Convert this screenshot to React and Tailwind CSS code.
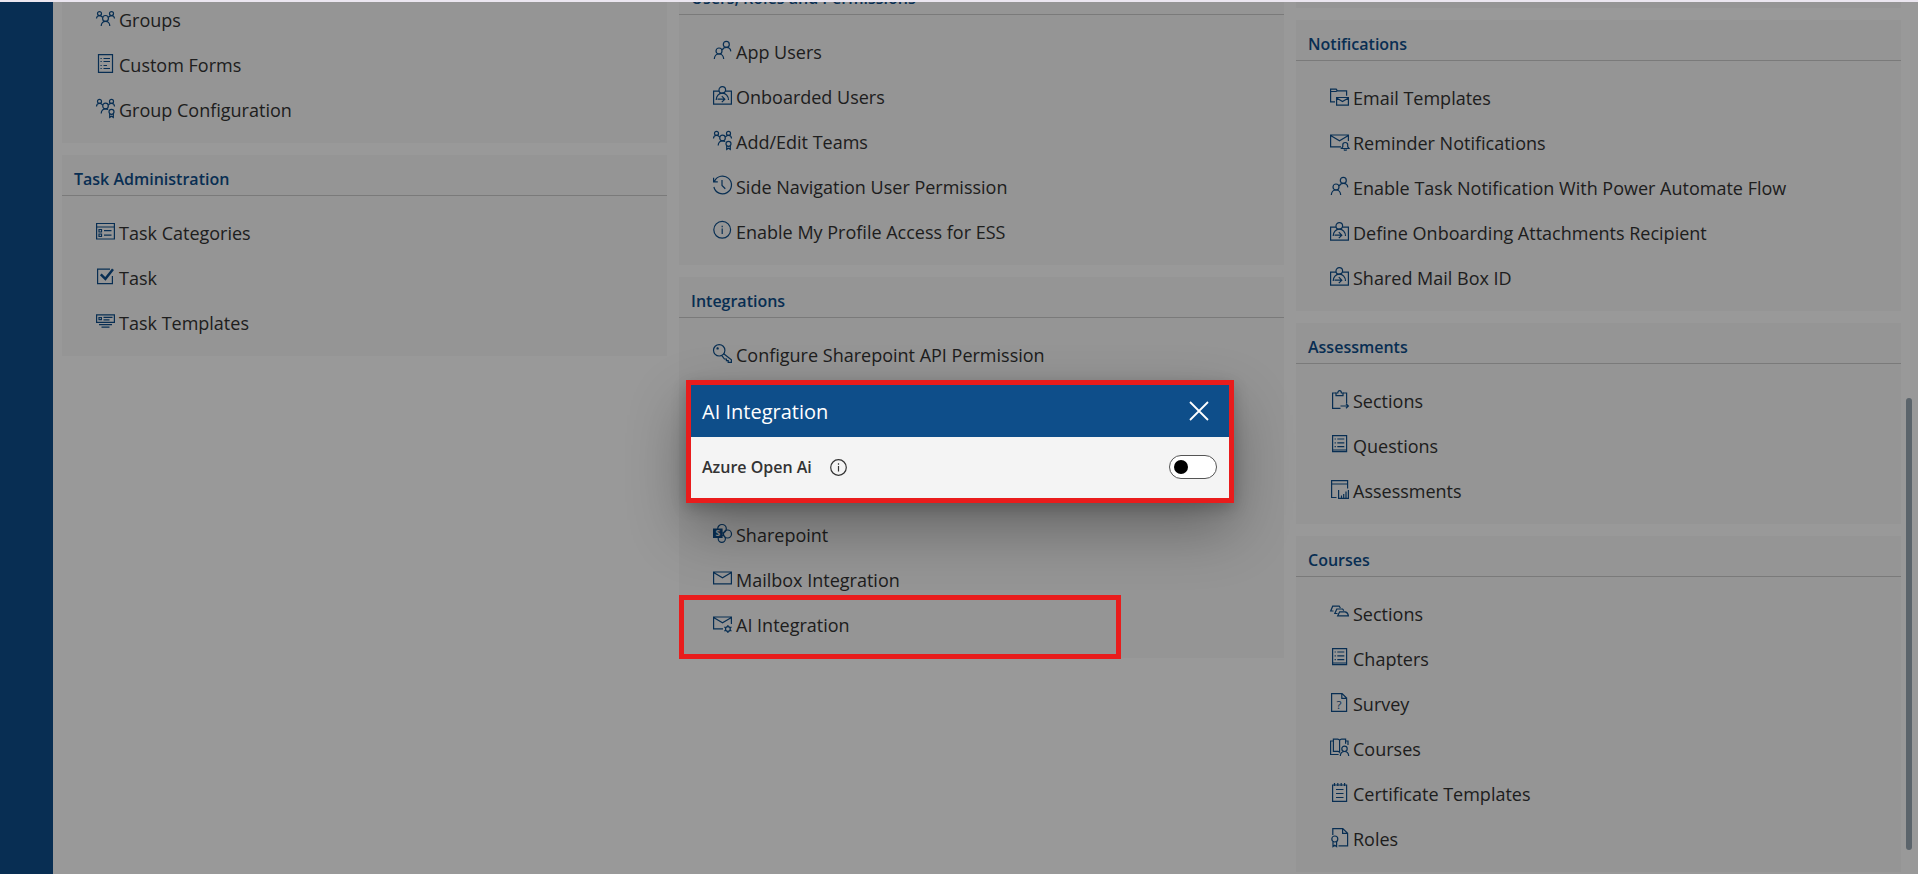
const Svg = ({ children }) => (
  <svg
    viewBox="0 0 19 19"
    className="size-[19px] shrink-0 overflow-visible"
    fill="none"
    stroke="currentColor"
    strokeWidth="1.2"
    aria-hidden="true"
  >
    {children}
  </svg>
);

const Letter = ({ x, y, size, children, className }) => (
  <text x={x} y={y} fontSize={size} textAnchor="middle" stroke="none" className={className}>
    {children}
  </text>
);

const icons = {
  groups: (
    <>
      <circle cx="3.5" cy="4.6" r="2" />
      <circle cx="15.5" cy="4.6" r="2" />
      <circle cx="9.5" cy="9.4" r="2.9" />
      <path d="M.5 9.6c0-1.700 1.200-3 3-3 1.500 0 2.500.8 3.200 1.800M18.500 9.600c0-1.700-1.200-3-3-3-1.500 0-2.500.8-3.200 1.800M5.200 17c0-2.800 1.800-4.700 4.300-4.700s4.300 1.900 4.300 4.700" />
    </>
  ),
  team: (
    <>
      <circle cx="3.500" cy="2.400" r="2" />
      <circle cx="15.500" cy="2.400" r="2" />
      <circle cx="9.500" cy="7" r="2.800" />
      <path d="M.5 7.400c0-1.700 1.200-3 3-3 1.500 0 2.500.8 3.200 1.600M18.500 7.400c0-1.700-1.200-3-3-3-1.500 0-2.500.8-3.200 1.600M5.200 14.500c0-2.800 1.800-4.700 4.300-4.700 1 0 1.900.2 2.700.8" />
      <circle cx="15.500" cy="12.800" r="2.500" />
      <path d="M13.700 14.500v4l1.800-1.200 1.800 1.200v-4" />
    </>
  ),
  form: (
    <>
      <path d="M2.500.6h14v17.800h-14z" />
      <path d="M7.500 4.500h6.500M7.500 7.500h6.500M7.500 11.500h3.500M7.500 14.500h6.500M4.500 4.500h1.200M4.500 7.500h1.200M4.500 11.500h1.200M4.500 14.500h1.200" />
    </>
  ),
  categories: (
    <>
      <path d="M.6 1.500h17.800v15.500H.6zM.6 5h17.800" />
      <path d="M3 7.500h2.500V10H3zM3 12h2.500v2.500H3zM8 8.700h7.500M8 13.200h7.500" />
    </>
  ),
  task: (
    <>
      <path d="M14 2.100H1.600v14.500h14.800V9" />
      <path d="M4.800 7.300l4.600 4.500 7.600-9.500" strokeWidth="2.500" />
    </>
  ),
  taskTemplate: (
    <>
      <path d="M.6 2.800h17.800v7.600H.6z" />
      <path d="M3 5.500h2.400v2.200H3zM7.500 5.300h9M7.500 7.800h6M3 12.600h13M5.500 15.200h8" />
    </>
  ),
  users: (
    <>
      <circle cx="13.300" cy="3.400" r="3" />
      <circle cx="6" cy="10" r="3" />
      <path d="M9.300 9c.6-1.700 2-2.600 4-2.600 2.500 0 4.300 1.600 4.500 4M1.300 18c.2-3 2-5 4.700-5s4.500 2 4.700 5" />
    </>
  ),
  onboard: (
    <>
      <circle cx="9.300" cy="3.900" r="3.300" />
      <path d="M6 5.200H.6v13h17.800v-13h-5.700" />
      <path d="M3.200 14c0-4 2.600-6.800 6.100-6.800s6.200 2.800 6.200 6.800M4.500 13.200h7M8.800 10.200l3 3-3 3" />
    </>
  ),
  history: (
    <>
      <path d="M1.500 5.200A8.900 8.900 0 1 1 .9 11M.6 1.800v4h4.200M9 4v5.500l3.300 3.200" />
    </>
  ),
  info: (
    <>
      <circle cx="9.200" cy="8.800" r="8.400" />
      <path d="M9.200 7.500v5.500M9.200 4.800v1.400" />
    </>
  ),
  key: (
    <>
      <circle cx="6.200" cy="6.300" r="5.700" />
      <path d="M10.700 9.800l7.700 6v2.600h-3.200v-1.700h-1.800V15h-2l-2.300-3.200" />
      <circle cx="4.600" cy="4.400" r=".6" fill="currentColor" />
    </>
  ),
  sharepoint: (
    <>
      <circle cx="9" cy="4.800" r="4.300" />
      <circle cx="14.500" cy="10" r="4" />
      <circle cx="8.800" cy="14.800" r="3.600" />
      <path d="M0 4.500h9.600v9.500H0z" fill="currentColor" stroke="none" />
      <Letter x="4.800" y="12.300" size="8.500" className="fill-[#f2f2f2] font-bold">S</Letter>
    </>
  ),
  mail: <path d="M.6 3h17.800v11.800H.6zM.6 3.500l8.900 5.300 8.900-5.300" />,
  mailGear: (
    <>
      <path d="M10 14.800H.6V3h17.800v7M.6 3.500l8.900 5.300 8.900-5.300" />
      <circle cx="14.900" cy="15" r="2.400" />
      <path d="M14.900 10.900v1.700M14.900 17.400v1.700M11.300 13l1.500.8M17 16.200l1.500.8M11.300 17l1.500-.8M17 13.800l1.500-.8" />
    </>
  ),
  mailBell: (
    <>
      <path d="M11 14.800H.6V3h17.800v6M.6 3.500l8.900 5.300 8.900-5.300" />
      <path d="M11.500 16.500h7.500l-1.300-1.800v-2c0-1.300-1-2.200-2.400-2.200s-2.500.9-2.500 2.200v2zM14 17.500c.3 1 2.300 1 2.600 0" />
    </>
  ),
  folderMail: (
    <>
      <path d="M5 14.800H.6V2.200h5.600l1.200 1.600h9.200v5M.6 4.500h5.500l1.300-.7" />
      <path d="M6.600 10.500h11.800v7.700H6.600zM6.600 11l5.900 3.500 5.900-3.500" />
    </>
  ),
  clipboard: (
    <>
      <path d="M6 3H2.600v15.400h7.900M13 3h3.600v10.500" />
      <path d="M6 5.600V3h1.800C7.800 1.600 8.500.7 9.600.7s1.800.9 1.800 2.300H13v2.600zM10.500 16h8M16 13.700l2.400 2.300-2.400 2.300" />
    </>
  ),
  list: (
    <>
      <path d="M2.600.6h14v16h-14zM2.600 15h14" />
      <path d="M7.300 4h7M7.300 7.800h7M7.300 11.600h7M4.600 4h1.200M4.600 7.800h1.200M4.600 11.600h1.200" />
    </>
  ),
  windowChart: (
    <>
      <path d="M6.500 17.500H1.600V.6h16v8M1.600 4h16" />
      <path d="M8.600 10v8.400h9.800V10M11.500 18v-2.500M13.700 18v-4M16 18v-6.500" />
    </>
  ),
  stack: (
    <>
      <path d="M3.500 8H.7l2-4.800h6.500l1.200 1.800" />
      <path d="M7.500 10.500H4.800l2-4.500h5.800l1.200 1.700" />
      <path d="M7.700 12.800l2-4h5.500c1.800.5 3 2 3.200 4z" />
    </>
  ),
  survey: (
    <>
      <path d="M1.600.6h10.500l4.500 4.500v13.300h-15zM11.800.8v4.500h4.600" />
      <Letter x="9" y="15.500" size="11.500" className="fill-current">?</Letter>
    </>
  ),
  courses: (
    <>
      <path d="M3.400 1.200h4.200c1 0 1.700.4 2 1.200v11.800c-.4-.5-1-.8-2-.8H3.400zM9.600 2.400c.4-.8 1-1.200 2-1.200h4v4.500M3.400 3H.6v13.500h8M15.600 3H18v4" />
      <circle cx="14.500" cy="10.800" r="2.700" />
      <path d="M10.300 18c.2-2.800 1.800-4.500 4.200-4.500s4 1.700 4.200 4.500" />
    </>
  ),
  certificate: (
    <>
      <path d="M2.600 2h14v16.400h-14zM4.500 0v3M7.800 0v3M11.200 0v3M14.600 0v3" />
      <path d="M6 6.500h7.500M6 10.500h7.500M6 14.500h7.500" />
    </>
  ),
  role: (
    <>
      <path d="M2.800 7V.6h10l4.800 4.600v12.600H8.500M12.600.8v4.600h4.800" />
      <circle cx="4.800" cy="11" r="3" />
      <path d="M3 13.500v5l1.800-1.300 1.800 1.300v-5" />
    </>
  ),
};

function Item({ icon, label, highlighted }) {
  return (
    <li className="relative">
      <a href="#" className="flex h-[45px] items-center gap-1 pl-[34px] whitespace-nowrap">
        <span className="pb-0.5 text-[#0e4e8a]">
          <Svg>{icons[icon]}</Svg>
        </span>
        <span className="text-lg text-[#333]">{label}</span>
      </a>
      {highlighted && (
        <span className="pointer-events-none absolute -top-[7px] -bottom-3 left-0 z-20 w-[442px] border-5 border-[#e91c1c]" />
      )}
    </li>
  );
}

function Card({ title, children }) {
  return (
    <section className="bg-[#f8f8f8]">
      <h2 className="flex h-[41px] items-end border-b border-[#ccc] px-3 pb-1 text-base font-semibold text-[#0e4e8a]">
        {title}
      </h2>
      <ul className="pt-3.5 pb-[11px]">{children}</ul>
    </section>
  );
}

function Dialog() {
  return (
    <div className="absolute inset-0 z-10 flex items-center justify-center bg-black/40 pt-1.5 pl-0.5">
      <div
        role="dialog"
        aria-labelledby="dialog-title"
        className="w-[548px] border-5 border-[#e91c1c] bg-[#f4f4f4] shadow-[0_26px_58px_rgba(0,0,0,0.32),0_5px_14px_rgba(0,0,0,0.2)]"
      >
        <header className="flex h-[52px] items-center justify-between bg-[#0e4e8a] pr-4 pl-[11px] text-white">
          <h1 id="dialog-title" className="pt-0.5 text-xl font-medium">AI Integration</h1>
          <button type="button" aria-label="Close" className="p-1">
            <svg viewBox="0 0 20 20" className="size-5" stroke="currentColor" strokeWidth="1.800" aria-hidden="true">
              <path d="M1 1l18 18M19 1L1 19" />
            </svg>
          </button>
        </header>
        <div className="flex h-[61px] items-center justify-between pr-3 pl-[11px]">
          <div className="flex items-center gap-[18px] text-[#333]">
            <label htmlFor="azure" className="text-base font-semibold">Azure Open Ai</label>
            <svg viewBox="0 0 17 17" className="size-[17px]" fill="none" stroke="currentColor" strokeWidth="1.200" aria-hidden="true">
              <circle cx="8.500" cy="8.500" r="7.800" />
              <path d="M8.500 7v5.500M8.500 4.300v1.400" />
            </svg>
          </div>
          <input
            id="azure"
            type="checkbox"
            role="switch"
            className="flex h-6 w-12 appearance-none items-center rounded-full border border-[#555] bg-white px-1 before:size-3.5 before:rounded-full before:bg-black checked:justify-end"
          />
        </div>
      </div>
    </div>
  );
}

export default function App() {
  return (
    <div className="flex h-screen flex-col overflow-hidden bg-white font-['Open_Sans','Noto_Sans',sans-serif]">
      <div className="h-0.5 shrink-0 bg-[#ebe6f0]" />
      <div className="relative flex min-h-0 flex-1">
        <nav className="w-[53px] shrink-0 bg-[#0e4e8a]" />
        <main className="min-w-0 flex-1 overflow-hidden pr-[5px] pl-[9px]">
          <div className="-mt-7 grid grid-cols-3 items-start gap-3">
            <div className="flex flex-col gap-3">
              <section className="bg-[#f8f8f8] pt-[23px] pb-[11px]">
                <ul>
                  <Item icon="groups" label="Groups" />
                  <Item icon="form" label="Custom Forms" />
                  <Item icon="team" label="Group Configuration" />
                </ul>
              </section>
              <Card title="Task Administration">
                <Item icon="categories" label="Task Categories" />
                <Item icon="task" label="Task" />
                <Item icon="taskTemplate" label="Task Templates" />
              </Card>
            </div>
            <div className="flex flex-col gap-3">
              <Card title="Users, Roles and Permissions">
                <Item icon="users" label="App Users" />
                <Item icon="onboard" label="Onboarded Users" />
                <Item icon="team" label="Add/Edit Teams" />
                <Item icon="history" label="Side Navigation User Permission" />
                <Item icon="info" label="Enable My Profile Access for ESS" />
              </Card>
              <Card title="Integrations">
                <Item icon="key" label="Configure Sharepoint API Permission" />
                <li className="h-[135px]" aria-hidden="true" />
                <Item icon="sharepoint" label="Sharepoint" />
                <Item icon="mail" label="Mailbox Integration" />
                <Item icon="mailGear" label="AI Integration" highlighted />
              </Card>
            </div>
            <div className="flex flex-col gap-3">
              <section className="h-[34px] bg-[#f8f8f8]" />
              <Card title="Notifications">
                <Item icon="folderMail" label="Email Templates" />
                <Item icon="mailBell" label="Reminder Notifications" />
                <Item icon="users" label="Enable Task Notification With Power Automate Flow" />
                <Item icon="onboard" label="Define Onboarding Attachments Recipient" />
                <Item icon="onboard" label="Shared Mail Box ID" />
              </Card>
              <Card title="Assessments">
                <Item icon="clipboard" label="Sections" />
                <Item icon="list" label="Questions" />
                <Item icon="windowChart" label="Assessments" />
              </Card>
              <Card title="Courses">
                <Item icon="stack" label="Sections" />
                <Item icon="list" label="Chapters" />
                <Item icon="survey" label="Survey" />
                <Item icon="courses" label="Courses" />
                <Item icon="certificate" label="Certificate Templates" />
                <Item icon="role" label="Roles" />
              </Card>
            </div>
          </div>
        </main>
        <div className="flex w-3 shrink-0 flex-col pt-[396px] pb-6">
          <div className="w-1.5 flex-1 rounded-full bg-[#98a7b2]" />
        </div>
        <Dialog />
      </div>
    </div>
  );
}
